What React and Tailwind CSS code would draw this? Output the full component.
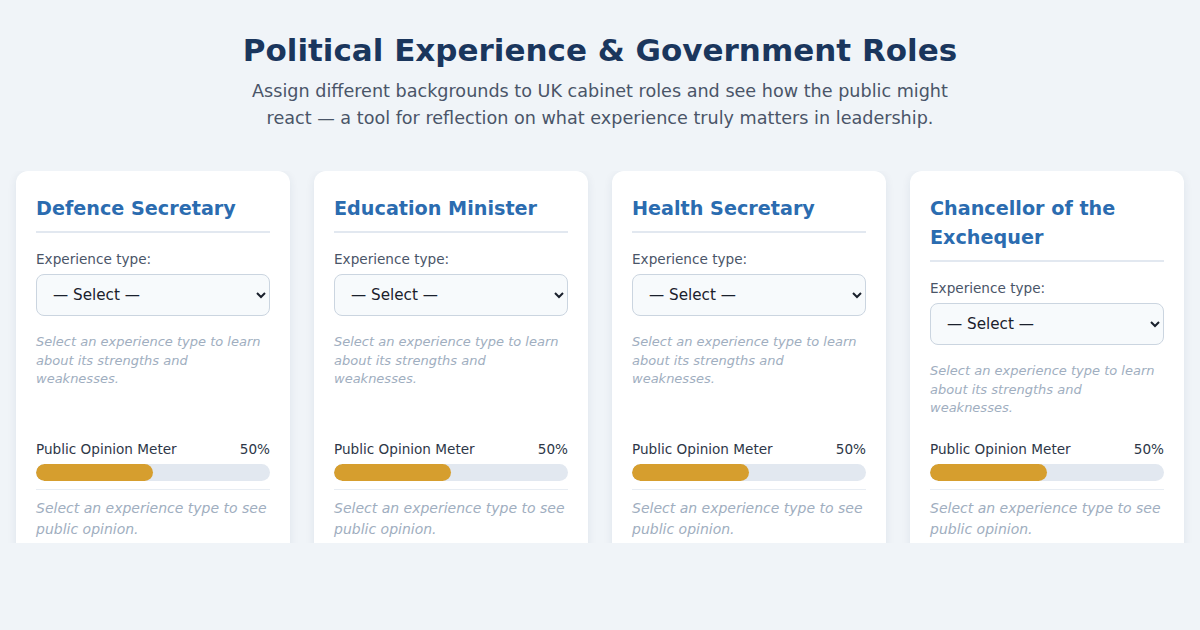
import React from 'react';

const roles = [
  'Defence Secretary',
  'Education Minister',
  'Health Secretary',
  'Chancellor of the Exchequer',
];

// --- Single role card ---
const RoleCard = ({ title }) => {
  const opinion = 50;
  return (
    <div className="bg-white rounded-xl shadow-[0_2px_10px_rgba(30,50,90,0.08)] px-5 pt-[23px] pb-5 flex flex-col">
      <h2 className="text-[19.2px] leading-[29px] font-bold text-[#2b6cb0] pb-2 border-b-2 border-[#e2e8f0] mb-[17px]">
        {title}
      </h2>
      <label className="block text-[13.6px] leading-[18px] text-[#4a5568] mb-1.5">Experience type:</label>
      <select className="w-full h-[42px] rounded-lg border border-[#cbd5e0] bg-[#f7fafc] px-3 text-[15.2px] text-[#1a202c]">
        <option>— Select —</option>
      </select>
      <p className="mt-[17px] mb-[22px] text-[13px] leading-[18.5px] italic text-[#a0aec0]">
        Select an experience type to learn about its strengths and weaknesses.
      </p>
      <div className="mt-auto">
        <div className="flex justify-between text-[13.6px] leading-[18px] text-[#2d3748] mb-1.5">
          <span>Public Opinion Meter</span>
          <span>{opinion}%</span>
        </div>
        <div className="h-[17px] rounded-full bg-[#e2e8f0] overflow-hidden">
          <div className="h-full rounded-full bg-[#d69e2e]" style={{ width: `${opinion}%` }}></div>
        </div>
        <div className="border-t border-[#e8edf3] mt-2 pt-2">
          <p className="text-[14px] leading-[21px] italic text-[#a0aec0]">
            Select an experience type to see public opinion.
          </p>
        </div>
      </div>
    </div>
  );
};

export default function App() {
  return (
    <div className="w-[1200px] h-[630px] bg-[#f0f4f8] font-['DejaVu_Sans',sans-serif]">
      <header className="pt-[31px] text-center">
        <h1 className="text-[31px] leading-[38px] font-bold text-[#1a365d]">
          Political Experience &amp; Government Roles
        </h1>
        <p className="mt-[9px] mx-auto max-w-[720px] text-[17.6px] leading-[27px] text-[#4a5568]">
          Assign different backgrounds to UK cabinet roles and see how the public might react — a tool for reflection on what experience truly matters in leadership.
        </p>
      </header>
      <div className="mt-[39px] h-[372px] overflow-hidden px-4">
        <div className="grid grid-cols-4 gap-6">
          {roles.map((r) => (
            <RoleCard key={r} title={r} />
          ))}
        </div>
      </div>
    </div>
  );
}
